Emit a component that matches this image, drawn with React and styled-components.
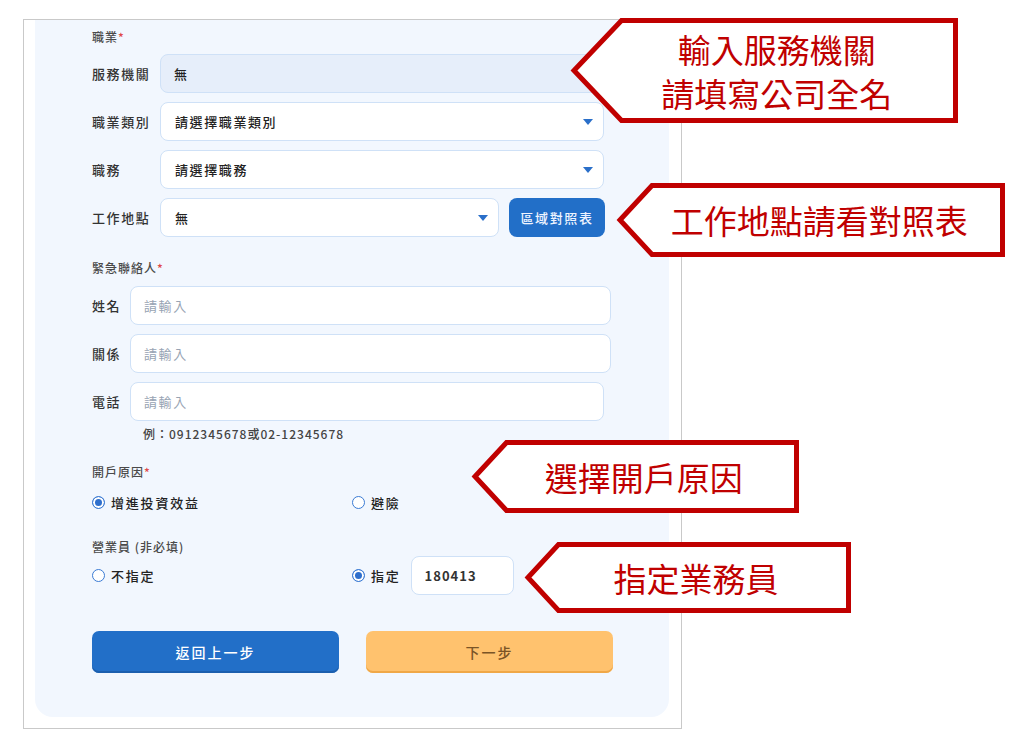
import styled, { createGlobalStyle } from "styled-components";

const GlobalStyle = createGlobalStyle`
  html, body {
    margin: 0;
    padding: 0;
    background: #ffffff;
  }
  body {
    font-family: "Noto Sans CJK TC", "Noto Sans", sans-serif;
  }
`;

const Page = styled.div`
  position: relative;
  width: 1024px;
  height: 746px;
  box-sizing: border-box;
  padding: 19px 0 0 23px;
  overflow: hidden;
`;

const Frame = styled.div`
  width: 659px;
  height: 710px;
  box-sizing: border-box;
  border: 1px solid #c9c9c9;
  padding: 0 12px 11px 11px;
  display: flex;
`;

const Card = styled.div`
  flex: 1;
  background: #f2f7fe;
  border-radius: 0 0 18px 18px;
  padding: 9px 0 0 57px;
  display: flex;
  flex-direction: column;
`;

const SectionLabel = styled.div`
  font-size: 12px;
  line-height: 16px;
  color: #4a4a4a;
  letter-spacing: 1px;
  margin-top: ${(p) => p.$mt || 0}px;
  font-weight: 500;

  span {
    color: #e04848;
  }
`;

const Fields = styled.div`
  display: flex;
  flex-direction: column;
  gap: 9px;
  margin-top: ${(p) => p.$mt || 0}px;
`;

const Row = styled.div`
  display: flex;
  align-items: center;
  height: 39px;
  width: ${(p) => p.$w || 512}px;
`;

const RowLabel = styled.div`
  width: ${(p) => p.$w}px;
  flex-shrink: 0;
  font-size: 13px;
  letter-spacing: 1.6px;
  color: #333;
  font-weight: 500;
`;

const TextInput = styled.input`
  flex: 1;
  min-width: 0;
  height: 100%;
  box-sizing: border-box;
  border: 1px solid #cfe1f7;
  border-radius: 8px;
  background: ${(p) => (p.disabled ? "#e6eefa" : "#ffffff")};
  padding: 0 13px;
  font-family: inherit;
  font-size: 13px;
  letter-spacing: 1.6px;
  font-weight: 500;
  color: #222;
  outline: none;

  &::placeholder {
    color: #97a3b3;
    font-weight: 400;
  }
`;

const SelectBox = styled.div`
  flex: 1;
  height: 100%;
  box-sizing: border-box;
  border: 1px solid #cfe1f7;
  border-radius: 8px;
  background: #ffffff;
  padding: 0 10px 0 14px;
  display: flex;
  align-items: center;
  justify-content: space-between;
  font-size: 13px;
  letter-spacing: 1.6px;
  font-weight: 500;
  color: #222;
`;

const Caret = () => (
  <svg width="10" height="6" viewBox="0 0 10 6">
    <path d="M0 0h10L5 6z" fill="#2a6fc9" />
  </svg>
);

const SmallButton = styled.button`
  margin-left: 10px;
  width: 96px;
  height: 100%;
  border: none;
  border-radius: 8px;
  background: #226fc8;
  color: #eef4ff;
  font-family: inherit;
  font-size: 13px;
  letter-spacing: 1.6px;
  font-weight: 500;
`;

const Hint = styled.div`
  margin: 5px 0 0 51px;
  font-size: 12px;
  line-height: 16px;
  letter-spacing: 1px;
  color: #444;
  font-weight: 500;
`;

const RadioGroup = styled.div`
  display: grid;
  grid-template-columns: 260px auto;
  align-items: center;
  height: ${(p) => p.$h}px;
  margin-top: ${(p) => p.$mt || 0}px;
`;

const Option = styled.label`
  display: flex;
  align-items: center;
  font-size: 13px;
  letter-spacing: 1.8px;
  color: #222;
  font-weight: 500;
`;

const Dot = styled.span`
  width: 13px;
  height: 13px;
  box-sizing: border-box;
  border-radius: 50%;
  border: 1.5px solid #3b7bd4;
  background: ${(p) => (p.$on ? "#2f6fcc" : "#ffffff")};
  box-shadow: ${(p) => (p.$on ? "inset 0 0 0 2px #ffffff" : "none")};
  margin-right: 6px;
  margin-top: 1px;
  flex-shrink: 0;
`;

const SalesInput = styled(TextInput)`
  flex: none;
  width: 103px;
  height: 39px;
  margin-left: 10px;
  font-weight: 700;
  letter-spacing: 1px;
  color: #333;
`;

const Actions = styled.div`
  display: flex;
  gap: 27px;
  margin-top: 36px;
`;

const ActionButton = styled.button`
  width: 247px;
  height: 42px;
  border: none;
  border-radius: 7px;
  font-family: inherit;
  font-size: 14px;
  letter-spacing: 2px;
  font-weight: 500;
  background: ${(p) => (p.$primary ? "#226fc8" : "#ffc26e")};
  color: ${(p) => (p.$primary ? "#ffffff" : "#7a5426")};
  box-shadow: ${(p) =>
    p.$primary ? "inset 0 -2px 0 #1c5fae" : "inset 0 -2px 0 #f0a848"};
`;

const CalloutBox = styled.div`
  position: absolute;
  left: ${(p) => p.$x}px;
  top: ${(p) => p.$y}px;
  width: ${(p) => p.$w}px;
  height: ${(p) => p.$h}px;

  svg {
    position: absolute;
    left: 0;
    top: 0;
    overflow: visible;
  }
`;

const CalloutText = styled.div`
  position: relative;
  height: 100%;
  box-sizing: border-box;
  padding-left: ${(p) => p.$pad}px;
  display: flex;
  flex-direction: column;
  align-items: center;
  justify-content: center;
  font-family: "Noto Sans CJK TC", sans-serif;
  font-size: 33px;
  line-height: 44px;
  color: #c00000;
  font-weight: 400;
  white-space: nowrap;
`;

const Callout = ({ x, y, w, h, lines }) => {
  const s = 5;
  const p = h / 2;
  const pts = [
    [s, h / 2],
    [p, s / 2],
    [w - s / 2, s / 2],
    [w - s / 2, h - s / 2],
    [p, h - s / 2],
  ]
    .map((pt) => pt.join(","))
    .join(" ");
  return (
    <CalloutBox $x={x} $y={y} $w={w} $h={h}>
      <svg width={w} height={h}>
        <polygon points={pts} fill="#ffffff" stroke="#c00000" strokeWidth={s} />
      </svg>
      <CalloutText $pad={p / 2}>
        {lines.map((l) => (
          <div key={l}>{l}</div>
        ))}
      </CalloutText>
    </CalloutBox>
  );
};

const callouts = [
  { x: 569, y: 18, w: 389, h: 105, lines: ["輸入服務機關", "請填寫公司全名"] },
  { x: 615, y: 183, w: 390, h: 74, lines: ["工作地點請看對照表"] },
  { x: 470, y: 440, w: 329, h: 73, lines: ["選擇開戶原因"] },
  { x: 523, y: 542, w: 328, h: 71, lines: ["指定業務員"] },
];

export default function App() {
  return (
    <Page>
      <GlobalStyle />
      <Frame>
        <Card>
          <SectionLabel>
            職業<span>*</span>
          </SectionLabel>
          <Fields $mt={9}>
            <Row>
              <RowLabel $w={68}>服務機關</RowLabel>
              <TextInput disabled defaultValue="無" />
            </Row>
            <Row>
              <RowLabel $w={68}>職業類別</RowLabel>
              <SelectBox>
                請選擇職業類別
                <Caret />
              </SelectBox>
            </Row>
            <Row>
              <RowLabel $w={68}>職務</RowLabel>
              <SelectBox>
                請選擇職務
                <Caret />
              </SelectBox>
            </Row>
            <Row $w={513}>
              <RowLabel $w={68}>工作地點</RowLabel>
              <SelectBox>
                無
                <Caret />
              </SelectBox>
              <SmallButton>區域對照表</SmallButton>
            </Row>
          </Fields>

          <SectionLabel $mt={23}>
            緊急聯絡人<span>*</span>
          </SectionLabel>
          <Fields $mt={10}>
            <Row $w={519}>
              <RowLabel $w={38}>姓名</RowLabel>
              <TextInput placeholder="請輸入" />
            </Row>
            <Row $w={519}>
              <RowLabel $w={38}>關係</RowLabel>
              <TextInput placeholder="請輸入" />
            </Row>
            <Row>
              <RowLabel $w={38}>電話</RowLabel>
              <TextInput placeholder="請輸入" />
            </Row>
          </Fields>
          <Hint>例：0912345678或02-12345678</Hint>

          <SectionLabel $mt={22}>
            開戶原因<span>*</span>
          </SectionLabel>
          <RadioGroup $h={20} $mt={12}>
            <Option>
              <Dot $on />
              增進投資效益
            </Option>
            <Option>
              <Dot />
              避險
            </Option>
          </RadioGroup>

          <SectionLabel $mt={27}>營業員 (非必填)</SectionLabel>
          <RadioGroup $h={40}>
            <Option>
              <Dot />
              不指定
            </Option>
            <Option>
              <Dot $on />
              指定
              <SalesInput defaultValue="180413" />
            </Option>
          </RadioGroup>

          <Actions>
            <ActionButton $primary>返回上一步</ActionButton>
            <ActionButton>下一步</ActionButton>
          </Actions>
        </Card>
      </Frame>
      {callouts.map((c) => (
        <Callout key={c.lines[0]} {...c} />
      ))}
    </Page>
  );
}
